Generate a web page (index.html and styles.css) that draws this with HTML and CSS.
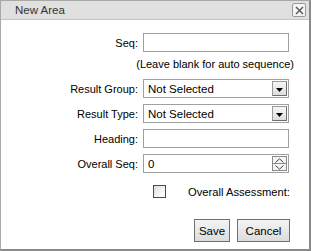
FILE: index.html
```html
<!DOCTYPE html>
<html>
<head>
<meta charset="utf-8">
<link rel="stylesheet" href="styles.css">
</head>
<body>
<div class="dialog">
  <div class="titlebar">
    <span class="title">New Area</span>
    <span class="close"><svg width="9" height="9" viewBox="0 0 9 9"><path d="M1 1L8 8M8 1L1 8" stroke="#555" stroke-width="1.4"/></svg></span>
  </div>
  <div class="content">
    <div class="form">
      <label class="lbl">Seq:</label>
      <div class="field"><span class="input"></span></div>
      <div class="hint">(Leave blank for auto sequence)</div>
      <label class="lbl">Result Group:</label>
      <div class="field"><span class="select"><span class="val">Not Selected</span><span class="arrow"><svg width="7" height="4" viewBox="0 0 7 4"><path d="M0 0H7L3.5 4Z" fill="#000"/></svg></span></span></div>
      <label class="lbl">Result Type:</label>
      <div class="field"><span class="select"><span class="val">Not Selected</span><span class="arrow"><svg width="7" height="4" viewBox="0 0 7 4"><path d="M0 0H7L3.5 4Z" fill="#000"/></svg></span></span></div>
      <label class="lbl">Heading:</label>
      <div class="field"><span class="input"></span></div>
      <label class="lbl">Overall Seq:</label>
      <div class="field"><span class="input spin"><span class="val">0</span><span class="spinner"><span class="sb"><svg width="9" height="5" viewBox="0 0 9 5"><path d="M0.5 4.5L4.5 0.8L8.5 4.5" fill="none" stroke="#444" stroke-width="1"/></svg></span><span class="sb"><svg width="9" height="5" viewBox="0 0 9 5"><path d="M0.5 0.5L4.5 4.2L8.5 0.5" fill="none" stroke="#444" stroke-width="1"/></svg></span></span></span></div>
      <div class="checkrow"><span class="check"></span><span class="checklbl">Overall Assessment:</span></div>
    </div>
    <div class="buttons">
      <button class="btn save">Save</button>
      <button class="btn cancel">Cancel</button>
    </div>
  </div>
</div>
</body>
</html>
```
FILE: styles.css
```css
html, body {
  margin: 0;
  padding: 0;
  background: #fff;
}
body {
  font-family: "Liberation Sans", Arial, sans-serif;
  font-size: 11px;
  color: #000;
}
.dialog {
  width: 308px;
  height: 248px;
  border: 1px solid #a8a8a8;
  border-right: 2px solid #8a8a8a;
  border-bottom: 2px solid #8a8a8a;
  display: flex;
  flex-direction: column;
  background: #fff;
}
.titlebar {
  height: 18px;
  background: #e0e0e0;
  border-bottom: 1px solid #c4c4c4;
  display: flex;
  align-items: center;
  justify-content: space-between;
  padding: 0 3px 0 14px;
}
.title {
  font-size: 11.5px;
  color: #333;
}
.close {
  width: 12px;
  height: 12px;
  border: 1px solid #9a9a9a;
  border-radius: 2px;
  background: #f4f4f4;
  display: flex;
  align-items: center;
  justify-content: center;
}
.content {
  flex: 1;
  display: flex;
  flex-direction: column;
  padding: 13px 0 0 0;
}
.form {
  display: grid;
  grid-template-columns: 137px 146px;
  column-gap: 5px;
  row-gap: 6px;
  align-items: center;
}
.lbl {
  text-align: right;
  color: #000;
}
.field {
  height: 19px;
  display: flex;
}
.input, .select {
  flex: 1;
  box-sizing: border-box;
  height: 19px;
  border: 1px solid #a0a0a0;
  background: #fff;
  display: flex;
  align-items: center;
}
.val {
  flex: 1;
  padding-left: 4px;
  font-size: 11.5px;
}
.arrow {
  width: 15px;
  height: 15px;
  margin-right: 1px;
  box-sizing: border-box;
  border: 1px solid #6e6e6e;
  border-top-color: #9a9a9a;
  border-left-color: #9a9a9a;
  background: linear-gradient(#f6f6f6, #dedede);
  display: flex;
  align-items: center;
  justify-content: center;
  padding-top: 2px;
}
.spinner {
  width: 15px;
  height: 15px;
  margin-right: 1px;
  display: flex;
  flex-direction: column;
  box-sizing: border-box;
  border: 1px solid #8a8a8a;
}
.sb {
  flex: 1;
  display: flex;
  align-items: center;
  justify-content: center;
  background: #f4f4f4;
}
.sb + .sb {
  border-top: 1px solid #8a8a8a;
}
.hint {
  grid-column: 1 / 3;
  justify-self: end;
  margin-right: -5px;
  margin-bottom: 3px;
}
.checkrow {
  grid-column: 2 / 3;
  display: flex;
  align-items: center;
  margin-top: 6px;
  height: 13px;
  white-space: nowrap;
}
.check {
  width: 13px;
  height: 13px;
  flex: none;
  box-sizing: border-box;
  border: 1px solid #4a4a4a;
  background: linear-gradient(135deg, #dcdcdc, #fafafa 70%);
  margin-left: 10px;
}
.checklbl {
  margin-left: 22px;
  font-size: 11.2px;
}
.buttons {
  display: flex;
  justify-content: flex-end;
  gap: 7px;
  padding: 21px 19px 0 0;
}
.btn {
  font-family: "Liberation Sans", Arial, sans-serif;
  font-size: 11.5px;
  height: 23px;
  border: 1px solid #707070;
  background: linear-gradient(#f4f4f4, #dcdcdc);
  color: #000;
  border-radius: 0;
  padding: 0;
}
.save { width: 36px; }
.cancel { width: 53px; }
```
